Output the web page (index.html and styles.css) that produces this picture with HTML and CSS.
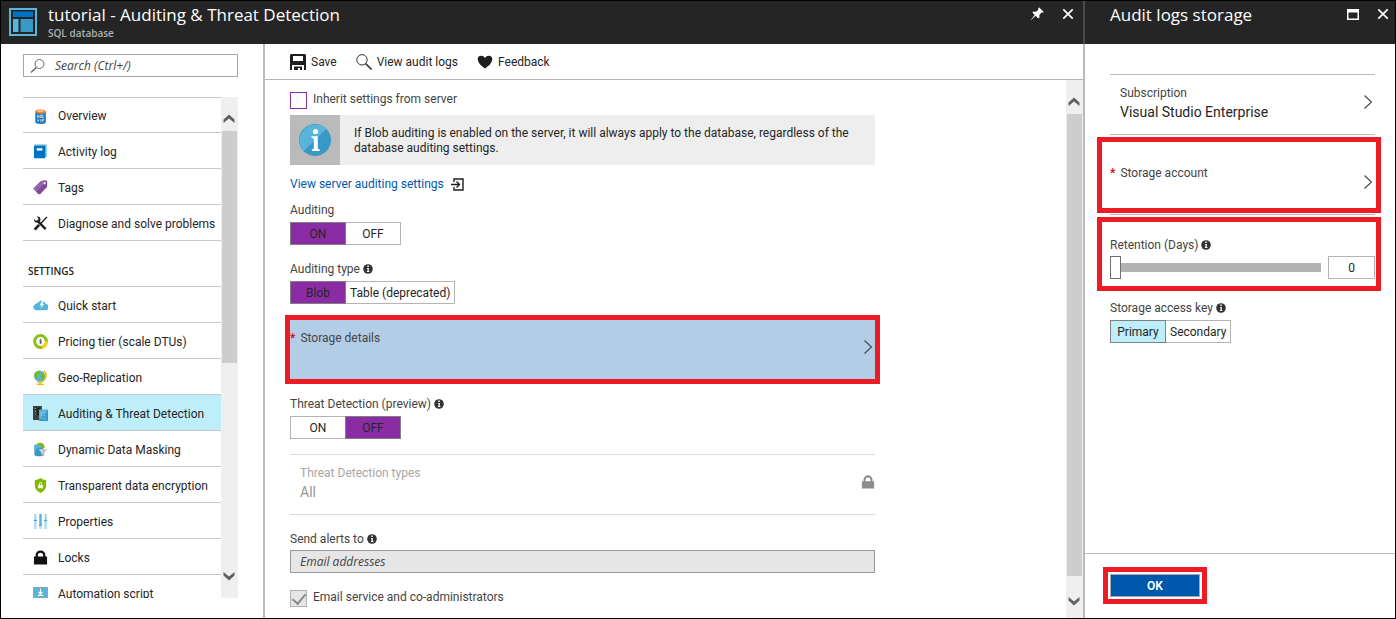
FILE: index.html
```html
<!DOCTYPE html>
<html lang="en">
<head>
<meta charset="utf-8">
<title>tutorial - Auditing &amp; Threat Detection</title>
<link rel="stylesheet" href="styles.css">
</head>
<body>
<svg class="defs" width="0" height="0" aria-hidden="true">
  <symbol id="i-info" viewBox="0 0 10 10"><circle cx="5" cy="5" r="4.800" fill="#333"/><path d="M4.300 1.600h1.500v1.400H4.300zM3.900 3.900h1.900v3.200h.6v.9H3.900V7.100h.6V4.800h-.6z" fill="#fff"/></symbol>
  <symbol id="i-up" viewBox="0 0 12 10"><path d="M.5 9V5.600L6 .5l5.500 5.100V9L6 4.400z" fill="#606060"/></symbol>
  <symbol id="i-down" viewBox="0 0 12 10"><path d="M.5 1v3.400L6 9.500l5.500-5.100V1L6 5.600z" fill="#606060"/></symbol>
  <symbol id="i-chev" viewBox="0 0 10 16"><path d="M1.500 1.500 8.500 8l-7 6.500" fill="none" stroke="#444" stroke-width="1.100"/></symbol>
  <symbol id="i-close" viewBox="0 0 12 12"><path d="m1.300 1.300 9.400 9.400M10.700 1.300 1.300 10.700" stroke="#fff" stroke-width="1.700"/></symbol>
  <symbol id="i-lock" viewBox="0 0 16 16"><path d="M1 7h14v8.500H1zM2.800 8V5.600a5.200 5.200 0 0 1 10.400 0V8h-2.400V5.600a2.800 2.800 0 0 0-5.600 0V8z" fill="currentColor"/></symbol>
</svg>
<div class="app">
  <section class="blade blade-main">
    <header class="blade-head">
      <svg class="logo" viewBox="0 0 28 28"><path d="M1 1h26v26H1z" fill="#252525" stroke="#59b4d9" stroke-width="2"/><path d="M4 3.500h20V9H4z" fill="#0072c6"/><path d="M4 11h5.500v13H4z" fill="#59b4d9"/><path d="M11.500 11H24v13H11.500z" fill="#3999c6"/></svg>
      <div class="head-text">
        <h1>tutorial - Auditing &amp; Threat Detection</h1>
        <p>SQL database</p>
      </div>
      <div class="head-tools">
        <button type="button" aria-label="Pin"><svg width="14" height="14" viewBox="0 0 14 14"><path d="M9 .3 13.700 5l-1.400.8-.8-.2-2.200 2.300.2 2.600-1.300 1-2.500-2.700L.3 13.700 4.600 8 2.400 5.600l1.200-1.100 2.600.2 2.200-2.100-.2-1z" fill="#fff"/></svg></button>
        <button type="button" aria-label="Close"><svg width="12" height="12"><use href="#i-close"/></svg></button>
      </div>
    </header>
    <div class="blade-body">
      <aside class="side">
        <div class="search">
          <svg width="16" height="16" viewBox="0 0 16 16" fill="none" stroke="#666"><circle cx="9.500" cy="6" r="4.500"/><path d="M6.200 9.400 1 14.500" stroke-width="1.400"/></svg>
          <input type="search" placeholder="Search (Ctrl+/)" aria-label="Search">
        </div>
        <div class="side-scroll">
          <nav class="menu">
            <ul class="menu-first">
              <li><a href="#"><svg viewBox="0 0 16 16"><path d="M2.500 3v11c0 2.400 11 2.400 11 0V3z" fill="#0f70b7"/><path d="M8 3v12.800c3 0 5.500-.6 5.500-1.800V3z" fill="#3080bd"/><ellipse cx="8" cy="2.700" rx="5.500" ry="2.300" fill="#f58220"/><ellipse cx="8" cy="2.400" rx="3.500" ry="1.100" fill="#fcc08a"/><path d="M6 6.500H4.500v1.400H6v1.400H4.300M7.300 6.500h1.500v2.600H7.300zM10.200 6v3.200h1.500M4.500 11l1 2.500 1-2.500M8.200 11v2.600M9.800 13.600v-2.400h1.700M9.800 12.300h1.500" fill="none" stroke="#d4e8f5" stroke-width=".8"/></svg>Overview</a></li>
              <li><a href="#"><svg viewBox="0 0 16 16"><path d="M1.500.6h13v13.500h-2.200V15H1z" fill="#59b4d9"/><path d="M1 2h11.800v13.200H1z" fill="#0072c6"/><path d="M4 4.500h6V7H4z" fill="#fff"/></svg>Activity log</a></li>
              <li><a href="#"><svg viewBox="0 0 16 16"><path d="m.5 9 7.500-7.500Q11 .2 15 .8q.7 4-.4 7L7.800 15 5.600 15.200z" fill="#804998"/><path d="m.5 9 7.500-7.500Q11 .2 15 .8L3.500 12.500z" fill="#9366aa"/><circle cx="12.300" cy="3.500" r="1.200" fill="#fff"/></svg>Tags</a></li>
              <li><a href="#"><svg viewBox="0 0 16 16" fill="none" stroke="#1e1e1e"><path d="m4.500 5 9 9" stroke-width="2.500"/><path d="M1 2.800 3 5l2.500-.6L5.700 2 4 .7q4-.6 4 3.300-.5 3-3.500 3Q1 7 1 2.800z" fill="#1e1e1e" stroke="none"/><path d="M14.800 1 8 8.200" stroke-width="1.400"/><path d="M6.500 9.500 1.800 14.500" stroke-width="3"/></svg>Diagnose and solve problems</a></li>
            </ul>
            <h2>SETTINGS</h2>
            <ul>
              <li><a href="#"><svg viewBox="0 0 16 16"><path d="M3 13A3.300 3.300 0 0 1 2.600 6.600 3 3 0 0 1 5.500 5a4.300 4.300 0 0 1 8 1.300A3.300 3.300 0 0 1 13 13z" fill="#59b4d9"/><path d="M10.200 2.200 7.200 7.600h2L7.800 11.500l4.200-5H10l2-4.300z" fill="#fff"/></svg>Quick start</a></li>
              <li><a href="#"><svg viewBox="0 0 16 16" fill="none"><circle cx="8" cy="8" r="6.300" stroke="#8cbf1a" stroke-width="3.200"/><path d="M14.300 8A6.300 6.300 0 0 1 9.500 14.100" stroke="#fcd116" stroke-width="3.200"/><path d="M9.300 6.200H7.300V8h1.600v1.800H6.800M8.100 5.200v5.600" stroke="#555" stroke-width=".8"/></svg>Pricing tier (scale DTUs)</a></li>
              <li><a href="#"><svg viewBox="0 0 16 16"><path d="M12 .8a7.300 7.300 0 0 1-7.500 11.900M7.500 13v2.300M4 15.300h7.500" fill="none" stroke="#f5b800" stroke-width="1.500"/><circle cx="7" cy="6.500" r="6" fill="#59b4d9"/><path d="M2 3.500 5.500.9l2.500.6L6.600 3.800 4.500 5.200 5 8 3 9 1.300 6zM8.500 4l3.300-.6 1 3-1.600 3.700-2-.6L8 6.500zM5.500 9l2 1.500-.6 1.600z" fill="#7fba00"/></svg>Geo-Replication</a></li>
              <li class="on"><a href="#" aria-current="page"><svg viewBox="0 0 16 16"><path d="M0 0h9.500v15H0z" fill="#3e3e3e"/><path d="M2 2.800h5M2 5.800h5M2 8.800h5" stroke="#111" stroke-width="1.700"/><path d="M2 2.600h1.500M2 5.600h1.500M2 8.600h1.500" stroke="#b8d432" stroke-width="1"/><path d="M6.500 4H16v12H6.500z" fill="#3999c6"/><path d="M6.500 4H16L6.500 14z" fill="#59b4d9"/><path d="m8 7 .7.800L10 6.400M8 10l.7.800L10 9.400M8 13l.7.800 1.300-1.400M11 7.500h2.500M11 10.500h2.500M11 13.500h2.500" fill="none" stroke="#d5edf8" stroke-width=".6"/></svg>Auditing &amp; Threat Detection</a></li>
              <li><a href="#"><svg viewBox="0 0 16 16"><path d="M1.500 3v10.500c0 2 9.500 2.400 9.500 0V3z" fill="#3999c6"/><path d="M6 2C8 .2 11.500 1 12 6H5L1.500 11V4z" fill="#59b4d9"/><path d="M3 2.500Q7-.5 11 2q1.500 2 1.500 4H9.300Q8 3 3 2.500z" fill="#7fba00"/><path d="M6 8h9L12 11v4.200L9 13v-2z" fill="#b5b5b5"/><path d="M6 8h4.500v5L9 12v-1.500z" fill="#e0e0e0"/></svg>Dynamic Data Masking</a></li>
              <li><a href="#"><svg viewBox="0 0 16 16"><path d="M8 0Q10.500 2 14 2V8q0 5-6 8Q2 13 2 8V2Q5.500 2 8 0z" fill="#7fba00"/><path d="M5.500 7.500h5V11h-5zM6.200 8V6.200a1.800 1.800 0 0 1 3.600 0V8H8.900V6.300a.9.900 0 0 0-1.800 0V8z" fill="#fff"/></svg>Transparent data encryption</a></li>
              <li><a href="#"><svg viewBox="0 0 16 16"><path d="M1 6h3v10H1zM6.500 12h3v4h-3zM12 6h3v10h-3z" fill="#b8dff0"/><path d="M1.500 0h2v6h-2zM12.500 0h2v6h-2z" fill="#9bcfe8"/><path d="M6.700 0h2.600v11H6.700z" fill="#59b4d9"/><path d="M1 6h3v1.500H1zM6.500 11h3v1.500h-3zM12 6h3v1.500h-3z" fill="#3999c6"/></svg>Properties</a></li>
              <li><a href="#"><svg class="ink"><use href="#i-lock"/></svg>Locks</a></li>
              <li><a href="#"><svg viewBox="0 0 16 16"><path d="M0 1h16v12H0z" fill="#a0a1a2"/><path d="M1 2h14v10H1z" fill="#59b4d9"/><path d="M5 13h6v2H5z" fill="#7a7a7a"/><path d="M8 3v5.500M5.800 6.300 8 8.500l2.200-2.200M5.300 10h5.400" fill="none" stroke="#fff" stroke-width="1.200"/></svg>Automation script</a></li>
            </ul>
          </nav>
          <div class="bar"><svg><use href="#i-up"/></svg><div class="thumb thumb-side"></div><svg><use href="#i-down"/></svg></div>
        </div>
      </aside>
      <main class="main">
        <div class="toolbar">
          <button type="button"><svg width="16" height="16" viewBox="0 0 16 16"><path d="M1 0h14l1 1v15h-2v-5H2v5H0V1zM3 2v5h10V2zM4 12.500h8V16h-2v-2H8v2H4z" fill="#1e1e1e" fill-rule="evenodd"/></svg>Save</button>
          <button type="button"><svg width="16" height="16" viewBox="0 0 16 16" fill="none" stroke="#333"><circle cx="6" cy="5.800" r="5.200"/><path d="m9.500 9.500 6 6" stroke-width="1.600"/></svg>View audit logs</button>
          <button type="button"><svg width="16" height="16" viewBox="0 0 16 16"><path d="M8 14.500Q.7 9.500.7 5.200C.7 1 6.200.7 8 4c1.800-3.300 7.300-3 7.300 1.200Q15.300 9.500 8 14.500z" fill="#1e1e1e"/></svg>Feedback</button>
        </div>
        <div class="main-scroll">
          <form class="form">
            <label class="check"><input type="checkbox"><span>Inherit settings from server</span></label>
            <div class="notice">
              <div class="notice-icon"><svg width="32" height="32" viewBox="0 0 32 32"><circle cx="16" cy="16" r="16" fill="#3999c6"/><path d="M27.300 4.700A16 16 0 0 0 4.700 27.300z" fill="#59b4d9"/><circle cx="16.500" cy="7.500" r="2.600" fill="#fff"/><path d="M12.500 12.300h6.300v12.400l2 .8V27h-8v-1.500l2-.8V14.400l-2.300-.6z" fill="#fff"/></svg></div>
              <p>If Blob auditing is enabled on the server, it will always apply to the database, regardless of the database auditing settings.</p>
            </div>
            <a class="link" href="#">View server auditing settings<svg width="13" height="13" viewBox="0 0 13 13" fill="none" stroke="#1e1e1e" stroke-width="1.400"><path d="M3 4V1h9v11H3V9M0 6.500h8M5.500 3.500l3 3-3 3"/></svg></a>
            <fieldset>
              <legend>Auditing</legend>
              <div class="toggle purple">
                <label><input type="radio" name="audit" checked>ON</label><label><input type="radio" name="audit">OFF</label>
              </div>
            </fieldset>
            <fieldset>
              <legend>Auditing type <svg class="info"><use href="#i-info"/></svg></legend>
              <div class="toggle purple">
                <label><input type="radio" name="type" checked>Blob</label><label><input type="radio" name="type">Table (deprecated)</label>
              </div>
            </fieldset>
            <button type="button" class="picker storage"><span class="star">*</span><span class="picker-text">Storage details</span><svg class="chev"><use href="#i-chev"/></svg></button>
            <fieldset>
              <legend>Threat Detection (preview) <svg class="info"><use href="#i-info"/></svg></legend>
              <div class="toggle purple">
                <label><input type="radio" name="threat">ON</label><label><input type="radio" name="threat" checked>OFF</label>
              </div>
            </fieldset>
            <button type="button" class="picker types" disabled><span class="picker-text">Threat Detection types<strong>All</strong></span><svg class="padlock"><use href="#i-lock"/></svg></button>
            <div class="field">
              <label for="mail">Send alerts to <svg class="info"><use href="#i-info"/></svg></label>
              <input id="mail" type="email" placeholder="Email addresses" disabled>
            </div>
            <label class="check"><input type="checkbox" checked disabled><span>Email service and co-administrators</span></label>
          </form>
          <div class="bar"><svg><use href="#i-up"/></svg><div class="thumb thumb-main"></div><svg><use href="#i-down"/></svg></div>
        </div>
      </main>
    </div>
  </section>
  <section class="blade blade-logs">
    <header class="blade-head">
      <h1>Audit logs storage</h1>
      <div class="head-tools">
        <button type="button" aria-label="Maximize"><svg width="12" height="11" viewBox="0 0 12 11"><path d="M0 0h12v11H0zM1.500 3.500v6h9v-6z" fill="#fff" fill-rule="evenodd"/></svg></button>
        <button type="button" aria-label="Close"><svg width="12" height="12"><use href="#i-close"/></svg></button>
      </div>
    </header>
    <form class="logs" id="logs">
      <button type="button" class="picker sub"><span class="picker-text">Subscription<strong>Visual Studio Enterprise</strong></span><svg class="chev"><use href="#i-chev"/></svg></button>
      <div class="marked">
        <button type="button" class="picker account"><span class="star">*</span><span class="picker-text">Storage account</span><svg class="chev"><use href="#i-chev"/></svg></button>
      </div>
      <div class="marked retention">
        <label for="days">Retention (Days) <svg class="info"><use href="#i-info"/></svg></label>
        <div class="slider"><input id="days" type="range" min="0" max="90" value="0"><input type="text" value="0" aria-label="Retention days"></div>
      </div>
      <fieldset>
        <legend>Storage access key <svg class="info"><use href="#i-info"/></svg></legend>
        <div class="toggle cyan">
          <label><input type="radio" name="key" checked>Primary</label><label><input type="radio" name="key">Secondary</label>
        </div>
      </fieldset>
    </form>
    <footer><button type="submit" form="logs" class="ok">OK</button></footer>
  </section>
</div>
</body>
</html>
```
FILE: styles.css
```css
* { box-sizing: border-box; }
body { margin: 0; }
body, button, input { font-family: Roboto, "Open Sans", sans-serif; font-size: 12px; line-height: 16px; color: #252525; }
h1, h2, p, ul, fieldset, legend { margin: 0; padding: 0; border: 0; font-weight: 400; }
ul { list-style: none; }
button { padding: 0; border: 0; background: none; text-align: left; }
svg { flex: none; display: block; }
.defs { position: absolute; }

.app { display: flex; height: 100vh; border: 1px solid #000; background: #fff; overflow: hidden; }
.blade { display: flex; flex-direction: column; min-height: 0; }
.blade-main { flex: 1; min-width: 0; }
.blade-logs { flex: 0 0 312px; border-left: 2px solid #bababa; }
.blade-head { display: flex; align-items: flex-start; flex: 0 0 43px; background: #252525; color: #fff; font-family: "Open Sans", sans-serif; }
.blade-head h1 { font-size: 17px; line-height: 24px; white-space: nowrap; }
.blade-head p { font-size: 10px; line-height: 12px; font-weight: 600; color: #b0b0b0; }
.logo { width: 28px; height: 28px; margin: 7px 11px 0 8px; }
.head-text { padding-top: 2px; }
.blade-logs .blade-head { padding: 2px 0 0 25px; margin-left: -2px; border-left: 2px solid #4a4a4a; }
.head-tools { display: flex; align-items: center; gap: 18px; height: 26px; margin-left: auto; padding-right: 9px; }
.blade-logs .head-tools { height: 22px; padding-right: 6px; }
.blade-body { display: flex; flex: 1; min-height: 0; }

.side { display: flex; flex-direction: column; flex: 0 0 264px; min-width: 0; padding: 10px 25px 20px 22px; border-right: 2px solid #bababa; min-height: 0; }
.search { display: flex; align-items: center; gap: 9px; flex: 0 0 23px; padding-left: 6px; margin-bottom: 20px; border: 1px solid #a6a6a6; }
.search input { flex: 1; min-width: 0; padding: 0; border: 0; outline: 0; background: none; }
::placeholder { color: #444; font-family: "Open Sans", sans-serif; font-style: italic; opacity: 1; }
.side-scroll { display: flex; flex: 1; min-height: 0; overflow: hidden; }
.menu { flex: 1; min-width: 0; overflow: hidden; }
.menu li { height: 36px; border-bottom: 1px solid #c8c8c8; }
.menu-first li:first-child { border-top: 1px solid #c8c8c8; }
.menu a { display: flex; align-items: center; gap: 10px; height: 100%; padding: 2px 0 0 10px; color: inherit; text-decoration: none; white-space: nowrap; }
.menu a svg { width: 15px; height: 15px; }
.menu .on { background: #bfeefb; }
.menu h2 { height: 46px; padding: 22px 5px 0; border-bottom: 1px solid #c8c8c8; font-family: "Open Sans", sans-serif; font-size: 10px; font-weight: 600; }
.ink { color: #111; }

.bar { display: flex; flex-direction: column; flex: 0 0 17px; padding: 17px 1px; background: #efefef; }
.bar svg { width: 12px; height: 10px; margin-left: 1px; }
.bar svg:last-child { margin-top: auto; }
.thumb { width: 15px; margin-top: 7px; background: #cdcdcd; }
.thumb-side { flex: 0 0 232px; }
.thumb-main { flex: 1; margin-bottom: 20px; }
.side .bar { padding-bottom: 17px; }
.main .bar { padding-bottom: 12px; }
.main .bar svg:last-child { margin-top: 0; }

.main { display: flex; flex-direction: column; flex: 1; min-width: 0; }
.toolbar { display: flex; align-items: center; gap: 19px; flex: 0 0 36px; padding-left: 25px; border-bottom: 1px solid #b4b4b4; }
.toolbar button { display: flex; align-items: center; gap: 5px; }
.main-scroll { display: flex; justify-content: space-between; flex: 1; min-height: 0; overflow: hidden; }
.form { flex: 0 1 635px; padding: 12px 25px 0; }
.check { display: flex; align-items: flex-start; gap: 6px; height: 17px; color: #444; }
.check span { margin-top: -1px; }
.check input { appearance: none; width: 17px; height: 17px; margin: 0; border: 1px solid #8a2da5; background: #fff; }
.check input:disabled { display: grid; place-items: center; border-color: #b0b0b0; background: #e6e6e6; }
.check input:checked::after { content: ""; width: 6px; height: 11px; margin-top: -3px; border: solid #888; border-width: 0 2px 2px 0; transform: rotate(40deg); }
.notice { display: flex; min-height: 50px; margin: 6px 0 11px; background: #eee; }
.notice-icon { display: grid; place-items: center; flex: 0 0 50px; background: #bababa; }
.notice p { padding: 11px 14px 9px; line-height: 15px; }
.link { display: flex; align-items: center; gap: 7px; width: max-content; margin-bottom: 10px; color: #0058ad; text-decoration: none; }
fieldset { margin-bottom: 15px; min-width: 0; }
fieldset + fieldset { margin-top: 16px; }
legend, .field label, .retention label { display: flex; align-items: center; gap: 3px; height: 16px; margin-bottom: 4px; color: #444; }
.info { width: 10px; height: 10px; }
.toggle { display: flex; height: 23px; }
.toggle label { display: flex; align-items: center; justify-content: center; min-width: 56px; padding: 0 4px; border: 1px solid #b4b4b4; }
.toggle label + label { margin-left: -1px; }
.toggle input { position: absolute; appearance: none; margin: 0; }
.toggle label:has(:checked) { z-index: 1; border-color: #808080; }
.purple label:has(:checked) { background: #8a2da5; }
.cyan label:has(:checked) { background: #bfeefb; }
.picker { display: flex; width: 100%; align-items: flex-start; color: #444; }
.picker-text { flex: 1; }
.picker strong { display: block; font-weight: 400; font-size: 14px; line-height: 22px; color: #252525; }
.star { color: #e3001b; font-weight: 600; }
.chev { width: 10px; height: 16px; margin-top: 9px; }
.storage { height: 59px; margin: 16px 0 17px; padding: 10px 2px 0 0; gap: 5px; background: #b3cde6; outline: 5px solid #ed1c24; }
.types { height: 61px; margin: 0 0 16px; padding: 10px 0 0 10px; border: solid #dcdcdc; border-width: 1px 0; color: #a6a6a6; }
.types strong { color: #999; }
.padlock { width: 14px; height: 14px; margin-top: 10px; color: #8c8c8c; }
.field input { display: block; width: 100%; height: 23px; padding: 0 9px; border: 1px solid #999; background: #e6e6e6; }
.field { margin-bottom: 17px; }
.field label, .retention label { margin-bottom: 3px; }

.logs { flex: 1; min-height: 0; padding: 30px 20px 0 25px; }
.sub { height: 61px; padding: 10px 2px 0 10px; border: solid #bababa; border-width: 1px 0; }
.marked { position: relative; }
.marked::after { content: ""; position: absolute; inset: 2px -6px 2px -13px; border: 5px solid #ed1c24; pointer-events: none; }
.account { height: 80px; padding: 30px 2px 0 0; gap: 5px; border-bottom: 1px solid #bababa; }
.retention { padding: 22px 0 14px; margin-bottom: 7px; }
.slider { display: flex; gap: 7px; }
.slider input { height: 23px; margin: 0; }
.slider [type="text"] { width: 47px; padding: 0; border: 1px solid #b4b4b4; text-align: center; }
.slider [type="range"] { appearance: none; flex: 1; min-width: 0; background: none; }
.slider [type="range"]::-webkit-slider-runnable-track { height: 9px; background: #b3b3b3; }
.slider [type="range"]::-webkit-slider-thumb { appearance: none; width: 11px; height: 23px; margin-top: -7px; border: 1px solid #707070; background: #fff; }
.blade-logs footer { flex: 0 0 65px; padding: 20px 25px; border-top: 1px solid #bababa; }
.ok { display: block; width: 90px; height: 23px; border: 1px solid #a6a6a6; background: #0058ad; color: #fff; font-weight: 600; text-align: center; outline: 5px solid #ed1c24; outline-offset: 2px; }
```
